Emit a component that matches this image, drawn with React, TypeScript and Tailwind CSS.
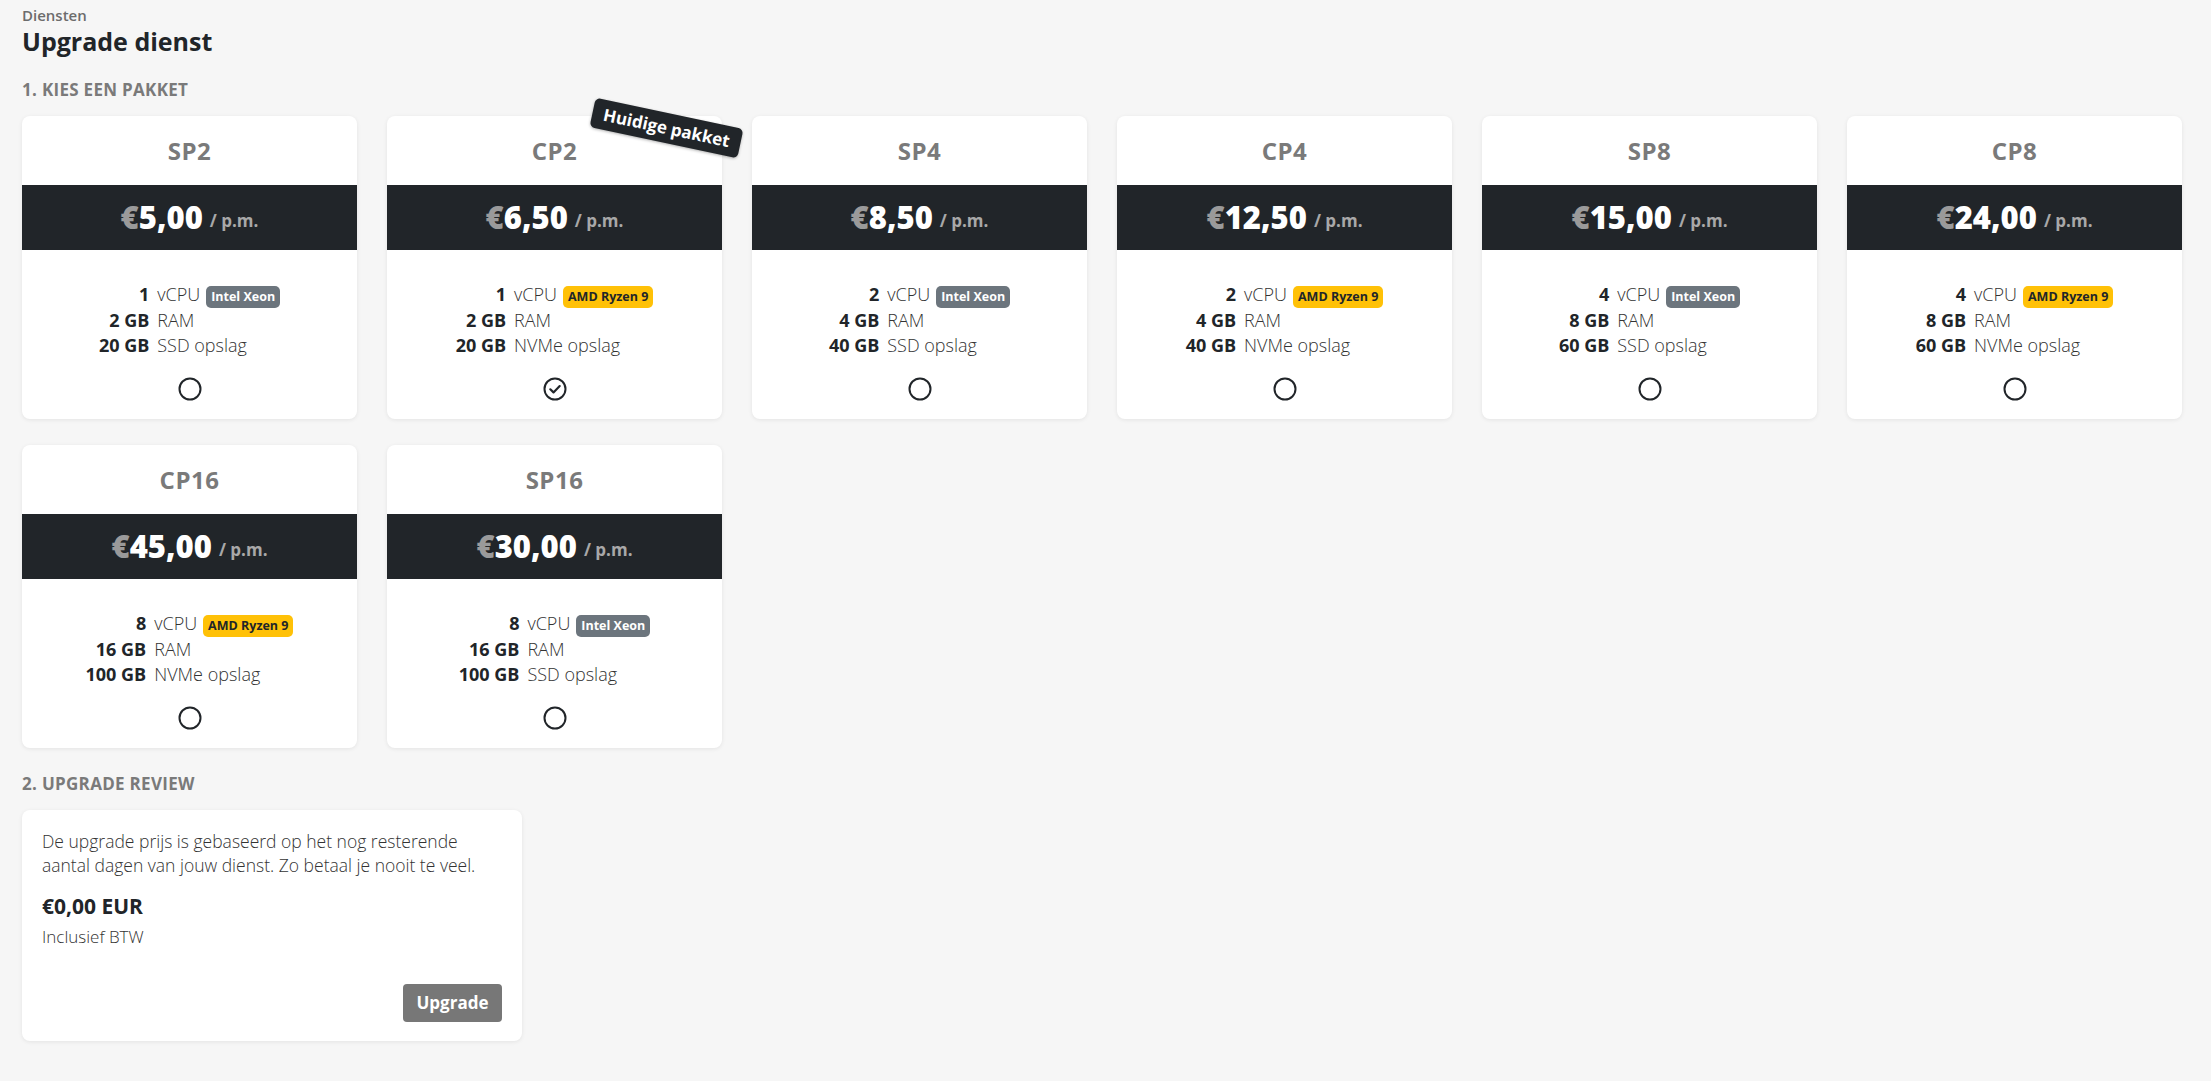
import React from "react";

type Plan = {
  name: string;
  price: string;
  cpu: string;
  cpuType: "intel" | "amd";
  ram: string;
  disk: string;
  diskType: string;
  current?: boolean;
};

const plans: Plan[] = [
  { name: "SP2", price: "5,00", cpu: "1", cpuType: "intel", ram: "2 GB", disk: "20 GB", diskType: "SSD opslag" },
  { name: "CP2", price: "6,50", cpu: "1", cpuType: "amd", ram: "2 GB", disk: "20 GB", diskType: "NVMe opslag", current: true },
  { name: "SP4", price: "8,50", cpu: "2", cpuType: "intel", ram: "4 GB", disk: "40 GB", diskType: "SSD opslag" },
  { name: "CP4", price: "12,50", cpu: "2", cpuType: "amd", ram: "4 GB", disk: "40 GB", diskType: "NVMe opslag" },
  { name: "SP8", price: "15,00", cpu: "4", cpuType: "intel", ram: "8 GB", disk: "60 GB", diskType: "SSD opslag" },
  { name: "CP8", price: "24,00", cpu: "4", cpuType: "amd", ram: "8 GB", disk: "60 GB", diskType: "NVMe opslag" },
  { name: "CP16", price: "45,00", cpu: "8", cpuType: "amd", ram: "16 GB", disk: "100 GB", diskType: "NVMe opslag" },
  { name: "SP16", price: "30,00", cpu: "8", cpuType: "intel", ram: "16 GB", disk: "100 GB", diskType: "SSD opslag" },
];

function Radio({ checked }: { checked?: boolean }) {
  return (
    <svg width="24" height="24" viewBox="0 0 24 24" fill="none">
      <circle cx="12" cy="12" r="10.5" stroke="#212529" strokeWidth="2" />
      {checked && (
        <path d="M7.3 12.3l3.2 3.1 6.2-6.3" stroke="#212529" strokeWidth="2.2" strokeLinecap="round" strokeLinejoin="round" />
      )}
    </svg>
  );
}

function Badge({ type }: { type: "intel" | "amd" }) {
  if (type === "intel") {
    return (
      <span className="ml-[6px] inline-flex h-[22px] items-center rounded-[5px] bg-[#6c757d] px-[5px] text-[12.5px] font-bold text-white">
        Intel Xeon
      </span>
    );
  }
  return (
    <span className="ml-[6px] inline-flex h-[22px] items-center rounded-[5px] bg-[#ffc107] px-[5px] text-[12.5px] font-bold text-[#212529]">
      AMD Ryzen 9
    </span>
  );
}

function PlanCard({ plan }: { plan: Plan }) {
  return (
    <div className="relative flex h-[303px] w-[335px] flex-col rounded-[8px] bg-white shadow-[0_1px_4px_rgba(0,0,0,0.08)]">
      {plan.current && (
        <div className="absolute right-[-20px] top-[-3px] z-10 rotate-[12deg] rounded-[5px] bg-[#212529] px-[11px] py-[4px] text-[17px] font-bold leading-[22px] text-white shadow-[0_1px_3px_rgba(0,0,0,0.3)]">
          Huidige pakket
        </div>
      )}
      <div className="flex h-[69px] items-center justify-center text-[24px] font-bold tracking-[0.5px] text-[#7a7a7a]">
        {plan.name}
      </div>
      <div className="flex h-[65px] items-center justify-center bg-[#212529]">
        <span className="text-[31px] font-extrabold leading-none">
          <span className="text-[#9a9a9a]">€</span>
          <span className="text-white">{plan.price}</span>
        </span>
        <span className="ml-[7px] mt-[6px] text-[17px] font-bold text-[#a8a8a8]">/ p.m.</span>
      </div>
      <div className="flex flex-1 flex-col items-center pt-[32px]">
        <table className="text-[18px] leading-[25px] text-[#333]">
          <tbody>
            <tr>
              <td className="pr-[8px] text-right font-bold text-[#212529]">{plan.cpu}</td>
              <td className="font-light">
                vCPU
                <Badge type={plan.cpuType} />
              </td>
            </tr>
            <tr>
              <td className="pr-[8px] text-right font-bold text-[#212529]">{plan.ram}</td>
              <td className="font-light">RAM</td>
            </tr>
            <tr>
              <td className="pr-[8px] text-right font-bold text-[#212529]">{plan.disk}</td>
              <td className="font-light">{plan.diskType}</td>
            </tr>
          </tbody>
        </table>
        <div className="mt-[19px]">
          <Radio checked={plan.current} />
        </div>
      </div>
    </div>
  );
}

export default function App() {
  return (
    <div
      className="min-h-[1081px] bg-[#f6f6f6] pl-[22px] pt-[5px] text-[#212529]"
      style={{ fontFamily: '"Open Sans", "Liberation Sans", sans-serif' }}
    >
      <div className="text-[15px] font-semibold leading-[20px] text-[#6c6c6c]">Diensten</div>
      <h1 className="text-[25px] font-bold leading-[32px] text-[#212529]">Upgrade dienst</h1>
      <div className="mt-[22px] text-[17px] font-bold uppercase leading-[22px] tracking-[0.3px] text-[#7a7a7a]">1. Kies een pakket</div>
      <div className="mt-[15px] grid grid-cols-[repeat(6,335px)] gap-x-[30px] gap-y-[26px]">
        {plans.map((p) => (
          <PlanCard key={p.name} plan={p} />
        ))}
      </div>
      <div className="mt-[25px] text-[17px] font-bold uppercase leading-[22px] tracking-[0.3px] text-[#7a7a7a]">2. Upgrade review</div>
      <div className="mt-[15px] flex h-[231px] w-[500px] flex-col rounded-[8px] bg-white px-[20px] pb-[19px] pt-[19px] shadow-[0_1px_4px_rgba(0,0,0,0.08)]">
        <p className="text-[17.5px] font-light leading-[24px] text-[#333]">
          De upgrade prijs is gebaseerd op het nog resterende aantal dagen van jouw dienst. Zo betaal je nooit te veel.
        </p>
        <div className="mt-[14px] text-[21px] font-bold leading-[30px] text-[#212529]">€0,00 EUR</div>
        <div className="mt-[4px] text-[17px] font-light leading-[24px] text-[#333]">Inclusief BTW</div>
        <div className="mt-auto flex justify-end">
          <button className="h-[38px] w-[99px] rounded-[4px] bg-[#777777] text-[17px] font-bold text-white">Upgrade</button>
        </div>
      </div>
    </div>
  );
}
